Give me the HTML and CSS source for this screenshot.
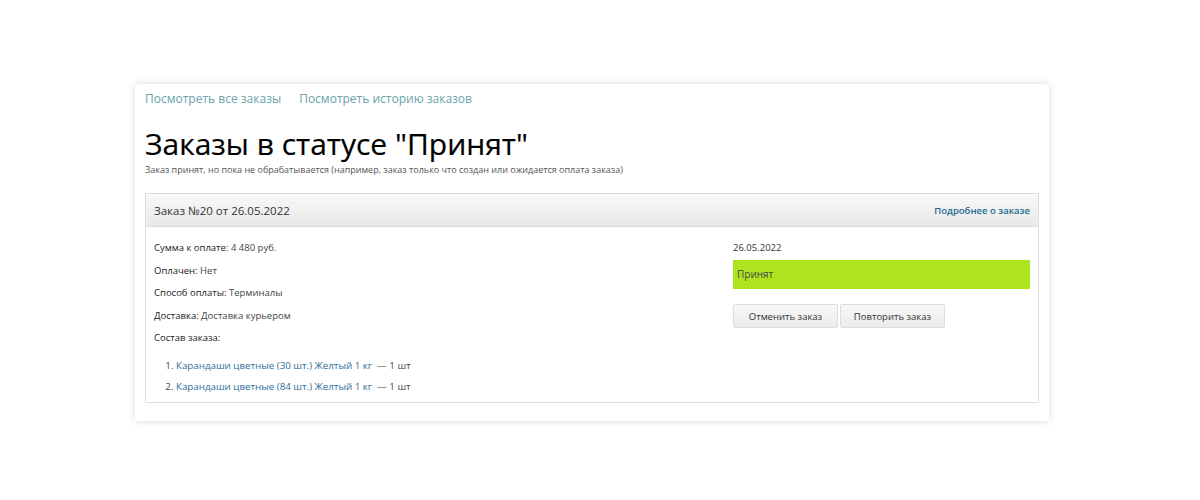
FILE: index.html
```html
<!DOCTYPE html>
<html lang="ru">
<head>
<meta charset="utf-8">
<link rel="stylesheet" href="styles.css">
</head>
<body>
<div class="page">
  <div class="nav">
    <a href="#">Посмотреть все заказы</a>
    <a href="#">Посмотреть историю заказов</a>
  </div>
  <h1 class="title">Заказы в статусе "Принят"</h1>
  <div class="subtitle">Заказ принят, но пока не обрабатывается (например, заказ только что создан или ожидается оплата заказа)</div>
  <div class="card">
    <div class="card-head">
      <span class="card-title">Заказ №20 от 26.05.2022</span>
      <a href="#" class="more">Подробнее о заказе</a>
    </div>
    <div class="card-body">
      <div class="left">
        <div class="row"><span class="lbl">Сумма к оплате:</span> 4 480 руб.</div>
        <div class="row"><span class="lbl">Оплачен:</span> Нет</div>
        <div class="row"><span class="lbl">Способ оплаты:</span> Терминалы</div>
        <div class="row"><span class="lbl">Доставка:</span> Доставка курьером</div>
        <div class="row"><span class="lbl">Состав заказа:</span></div>
        <ol class="items">
          <li><a href="#">Карандаши цветные (30 шт.) Желтый 1 кг</a>&nbsp; — 1 шт</li>
          <li><a href="#">Карандаши цветные (84 шт.) Желтый 1 кг</a>&nbsp; — 1 шт</li>
        </ol>
      </div>
      <div class="right">
        <div class="date">26.05.2022</div>
        <div class="status">Принят</div>
        <div class="buttons">
          <button class="btn">Отменить заказ</button>
          <button class="btn">Повторить заказ</button>
        </div>
      </div>
    </div>
  </div>
</div>
</body>
</html>
```
FILE: styles.css
```css
html, body {
  margin: 0;
  padding: 0;
  background: #fff;
}
body {
  font-family: "Open Sans", "DejaVu Sans", sans-serif;
  color: #333;
  padding-top: 84px;
  padding-bottom: 20px;
}
.page {
  width: 894px;
  margin-left: 135px;
  padding: 0 10px 18px 10px;
  background: #fff;
  box-shadow: 0 0 7px rgba(0, 0, 0, 0.16);
}
.nav {
  display: flex;
  gap: 18px;
  padding-top: 6px;
  height: 18px;
  font-size: 12px;
  line-height: 18px;
}
.nav a {
  color: #6aa3ab;
  text-decoration: none;
}
.title {
  margin: 16px 0 0 0;
  font-size: 30px;
  font-weight: 400;
  line-height: 40px;
  color: #000;
  -webkit-text-stroke: 0.2px #000;
}
.subtitle {
  font-size: 9px;
  line-height: 12px;
  color: #555;
  margin-top: 0;
}
.card {
  margin-top: 17px;
  border: 1px solid #dcdcdc;
}
.card-head {
  display: flex;
  justify-content: space-between;
  align-items: center;
  height: 32px;
  padding: 0 8px;
  background: linear-gradient(#f9f9f9, #e9e9e9);
  border-bottom: 1px solid #dcdcdc;
}
.card-title {
  font-size: 11.5px;
  font-weight: 500;
  color: #333;
}
.more {
  font-size: 9.5px;
  font-weight: 600;
  color: #1d6b8f;
  text-decoration: none;
}
.card-body {
  display: grid;
  grid-template-columns: 1fr 297px;
  gap: 20px;
  padding: 14px 8px 1px 8px;
}
.row {
  font-size: 9.5px;
  line-height: 13px;
  color: #444;
  margin-bottom: 9.5px;
}
.lbl {
  color: #222;
  font-weight: 500;
}
.items {
  margin: 15px 0 0 0;
  padding-left: 22px;
  font-size: 9.75px;
  line-height: 13px;
  color: #444;
}
.items li {
  margin-bottom: 8px;
}
.items a {
  color: #2d6e9a;
  text-decoration: none;
}
.date {
  font-size: 9.5px;
  line-height: 13px;
  color: #333;
}
.status {
  margin-top: 6px;
  height: 29px;
  line-height: 29px;
  padding: 0 4px;
  background: #aee41f;
  font-size: 10px;
  color: #444;
}
.buttons {
  display: flex;
  gap: 2px;
  margin-top: 15px;
}
.btn {
  width: 105px;
  height: 24px;
  font-family: "Open Sans", "DejaVu Sans", sans-serif;
  font-size: 9.5px;
  color: #333;
  background: linear-gradient(#f8f8f8, #ececec);
  border: 1px solid #dcdcdc;
  border-radius: 2px;
  padding: 0;
}
```
